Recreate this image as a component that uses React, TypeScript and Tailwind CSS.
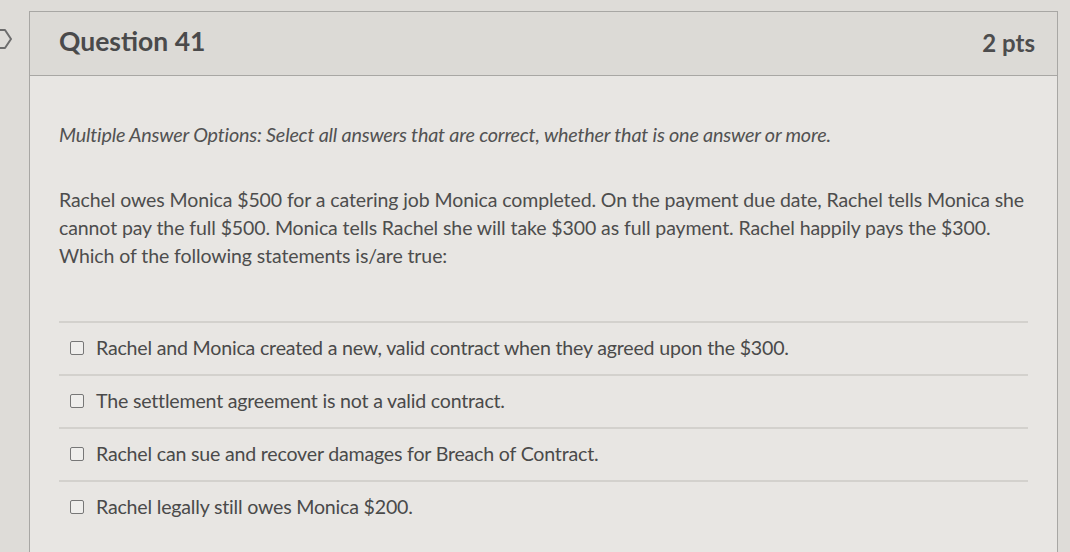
import React from "react";

const answers = [
  "Rachel and Monica created a new, valid contract when they agreed upon the $300.",
  "The settlement agreement is not a valid contract.",
  "Rachel can sue and recover damages for Breach of Contract.",
  "Rachel legally still owes Monica $200.",
];

function FlagIcon() {
  return (
    <svg width="18" height="22" viewBox="0 0 18 22" className="absolute left-[-4px] top-[28px]">
      <path d="M1 2 H9 L15 11 L9 20 H1" fill="none" stroke="#6d6d6d" strokeWidth="2" strokeLinejoin="round" />
    </svg>
  );
}

export default function App() {
  return (
    <div
      className="relative w-[1070px] h-[552px] overflow-hidden bg-[#dedcd8] text-[#4b4b4b]"
      style={{ fontFamily: "Lato, 'Open Sans', sans-serif" }}
    >
      <FlagIcon />
      <div className="ml-[29px] mt-[11px] w-[1029px] h-[560px] border border-[#a8a7a4] bg-[#e8e6e3]">
        <div className="h-[64px] flex items-center justify-between pl-[29px] pr-[22px] bg-[#dcdad6] border-b border-[#a8a7a4]">
          <h2 className="text-[26.5px] font-bold text-[#4a4a4b] mt-[-4px]">Question 41</h2>
          <span className="text-[24px] font-bold text-[#4d4d4e] mt-[-2px]">2 pts</span>
        </div>
        <div className="pl-[29px] pr-[20px]">
          <p className="mt-[46px] text-[19.8px] leading-[24px] italic text-[#525252] tracking-[-0.2px]">
            Multiple Answer Options: Select all answers that are correct, whether that is one answer or more.
          </p>
          <p className="mt-[40px] text-[19.5px] leading-[28px] text-[#4d4d4d] tracking-[-0.1px]">
            Rachel owes Monica $500 for a catering job Monica completed. On the payment due date, Rachel tells Monica she
            cannot pay the full $500. Monica tells Rachel she will take $300 as full payment. Rachel happily pays the $300.
            Which of the following statements is/are true:
          </p>
          <div className="mt-[51px] w-[969px]">
            {answers.map((a) => (
              <div key={a} className="h-[53px] border-t-2 border-[#d3d1cd] flex items-center pl-[11px] pb-[2px]">
                <span className="w-[14px] h-[14px] border-[1.5px] border-[#777] rounded-[2px] bg-[#efeeec] shrink-0" />
                <span className="ml-[12px] text-[19.6px] text-[#4a4a4a] tracking-[-0.2px]">{a}</span>
              </div>
            ))}
          </div>
        </div>
      </div>
    </div>
  );
}
